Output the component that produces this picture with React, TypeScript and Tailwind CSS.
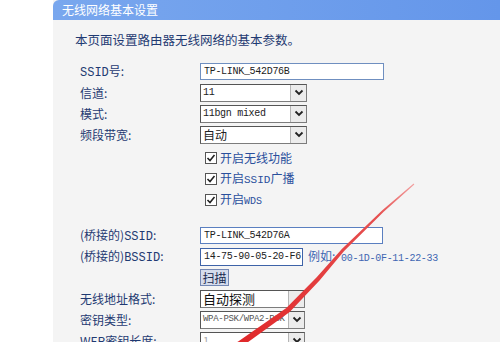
import React from "react";

const CJK = { fontFamily: '"Noto Sans CJK SC", sans-serif' } as React.CSSProperties;

function Chevron() {
  return (
    <svg width="10" height="7" viewBox="0 0 10 7">
      <path d="M1.5 1.5 L5 5 L8.5 1.5" fill="none" stroke="#222" strokeWidth="1.8" />
    </svg>
  );
}

function Select({ children, w = "w-[107px]", chevron = true, textCls = "" }: { children: React.ReactNode; w?: string; chevron?: boolean; textCls?: string }) {
  return (
    <div className={`${w} h-[18px] flex border border-[#7c7c7c] border-t-[#555] border-l-[#555] bg-white`}>
      <div className={`flex-1 overflow-hidden whitespace-nowrap pl-[2px] flex items-center leading-none ${textCls}`}>{children}</div>
      <div className="w-[16px] h-full bg-[#ececec] border-l border-[#b5b5b5] flex items-center justify-center">
        {chevron && <Chevron />}
      </div>
    </div>
  );
}

function Row({ label, children, cls = "h-[21px]" }: { label?: React.ReactNode; children?: React.ReactNode; cls?: string }) {
  return (
    <div className={`flex items-center ${cls}`}>
      <div className="w-[120px] shrink-0 text-[12px] text-[#1f3a72] whitespace-nowrap leading-none">{label}</div>
      <div className="flex items-center">{children}</div>
    </div>
  );
}

function Check({ children }: { children: React.ReactNode }) {
  return (
    <div className="flex items-center pl-[5px]">
      <div className="w-[12px] h-[12px] border border-[#555] bg-white flex items-center justify-center">
        <svg width="10" height="10" viewBox="0 0 10 10">
          <path d="M1.5 5 L4 7.5 L8.5 2" fill="none" stroke="#222" strokeWidth="1.6" />
        </svg>
      </div>
      <span className="ml-[3px] text-[12px] text-[#2a4f9c] leading-none">{children}</span>
    </div>
  );
}

const mono = "font-['Liberation_Mono',monospace]";
const inMono = "font-['Liberation_Mono',monospace] text-[10px] tracking-[-0.3px]";

function Arrow() {
  const pts: [number, number][] = [
    [414, 184],
    [383, 211],
    [343, 250],
    [318, 279],
    [288, 310],
    [240, 344],
    [228, 352],
  ];
  const n = pts.length;
  const left: string[] = [];
  const right: string[] = [];
  pts.forEach((p, i) => {
    const a = pts[Math.max(0, i - 1)];
    const b = pts[Math.min(n - 1, i + 1)];
    const dx = b[0] - a[0];
    const dy = b[1] - a[1];
    const len = Math.hypot(dx, dy);
    const nx = -dy / len;
    const ny = dx / len;
    const hw = 0.5 + (i / (n - 1)) * 3.2;
    left.push(`${p[0] + nx * hw},${p[1] + ny * hw}`);
    right.unshift(`${p[0] - nx * hw},${p[1] - ny * hw}`);
  });
  return (
    <svg className="absolute left-0 top-0 pointer-events-none" width="500" height="342" viewBox="0 0 500 342">
      <defs>
        <linearGradient id="ag" x1="414" y1="184" x2="240" y2="342" gradientUnits="userSpaceOnUse">
          <stop offset="0" stopColor="#f2a0a0" />
          <stop offset="0.2" stopColor="#e65050" />
          <stop offset="1" stopColor="#e0282a" />
        </linearGradient>
      </defs>
      <polygon points={[...left, ...right].join(" ")} fill="url(#ag)" />
    </svg>
  );
}

export default function App() {
  return (
    <div className="relative w-[500px] h-[342px] overflow-hidden bg-white flex" style={CJK}>
      <div className="w-[53px] shrink-0 bg-white" />
      <div className="flex-1 bg-[#f4f4f4]">
        <div className="h-[20px] rounded-tl-[6px] bg-gradient-to-r from-[#79a7ee] to-[#6496ea] flex items-center pl-[9px] text-white text-[12px] leading-none">
          无线网络基本设置
        </div>
        <div className="pl-[27px]">
          <div className="pt-[12px] h-[28px] flex items-center text-[12.5px] text-[#1f3a72] -ml-[5px] leading-none">
            本页面设置路由器无线网络的基本参数。
          </div>
          <div className="mt-[13px]">
            <Row label={<><span className={mono}>SSID</span>号:</>}>
              <div className={`w-[184px] h-[17px] border border-[#6f8fc0] bg-white pl-[3px] flex items-center text-[#222] ${inMono} leading-none`}>
                TP-LINK_542D76B
              </div>
            </Row>
            <Row label="信道:">
              <Select textCls={`${inMono} text-[#222]`}>11</Select>
            </Row>
            <Row label="模式:">
              <Select textCls={`${inMono} text-[#222]`}>11bgn mixed</Select>
            </Row>
            <Row label="频段带宽:">
              <Select textCls="text-[12px] text-[#222]">自动</Select>
            </Row>
            <div className="mt-[2px]">
              <Row>
                <Check>开启无线功能</Check>
              </Row>
              <Row>
                <Check>
                  开启<span className={`${mono} text-[11px]`}>SSID</span>广播
                </Check>
              </Row>
              <Row>
                <Check>
                  开启<span className={`${mono} text-[10px]`}>WDS</span>
                </Check>
              </Row>
            </div>
            <div className="mt-[15px]">
              <Row label={<>(桥接的)<span className={mono}>SSID</span>:</>}>
                <div className={`w-[183px] h-[17px] border border-[#5a7fc0] bg-white pl-[3px] flex items-center text-[#222] ${inMono} leading-none`}>
                  TP-LINK_542D76A
                </div>
              </Row>
              <Row label={<>(桥接的)<span className={mono}>BSSID</span>:</>}>
                <div className={`w-[103px] h-[18px] border border-[#3e63a8] bg-white pl-[3px] flex items-center text-[#222] ${inMono} leading-none whitespace-nowrap overflow-hidden`}>
                  14-75-90-05-20-F6
                </div>
                <span className="ml-[5px] text-[12px] text-[#3e66b2] leading-none whitespace-nowrap">
                  例如:<span className={inMono}> 00-1D-0F-11-22-33</span>
                </span>
              </Row>
              <Row>
                <div className="w-[29px] h-[17px] bg-[#d5dcec] border border-[#7387b4] flex items-center justify-center text-[12px] text-[#1a2a50] leading-none">
                  扫描
                </div>
              </Row>
              <Row label="无线地址格式:">
                <Select w="w-[105px]" chevron={false} textCls="text-[13px] text-[#111]">自动探测</Select>
              </Row>
              <Row label="密钥类型:">
                <Select w="w-[105px]" textCls={`${mono} text-[9px] tracking-[-0.3px] text-[#555]`}>WPA-PSK/WPA2-PSK</Select>
              </Row>
              <Row label="WEP密钥长度:">
                <Select w="w-[105px]" textCls="text-[11px] text-[#aaa]">1</Select>
              </Row>
            </div>
          </div>
        </div>
      </div>
      <Arrow />
    </div>
  );
}
